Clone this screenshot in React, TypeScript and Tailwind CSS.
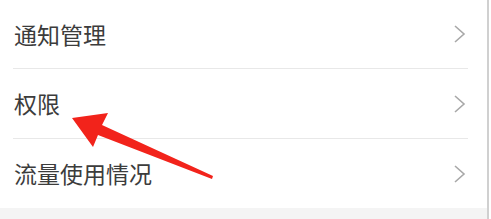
const items = ["通知管理", "权限", "流量使用情况"];

const Chevron = () => (
  <svg width="13" height="20" viewBox="0 0 13 20" fill="none">
    <polyline
      points="2,2 11,10 2,18"
      stroke="#a8a8a8"
      strokeWidth="1.6"
      strokeLinejoin="miter"
    />
  </svg>
);

const App = () => {
  return (
    <div className="relative flex h-[219px] w-[491px] overflow-hidden bg-white">
      <div className="flex w-[487px] flex-col">
        {items.map((label, i) => (
          <div key={label} className="flex flex-col">
            {i > 0 && <div className="ml-[13px] mr-[19px] h-px bg-[#e8e8e8]" />}
            <div
              className={`flex items-center justify-between pl-[14px] pr-[21px] ${
                i === 0 ? "h-[68px]" : "h-[69px]"
              }`}
            >
              <span
                className="text-[23px] leading-none text-[#3c3c3c]"
                style={{ fontFamily: '"Noto Sans CJK SC", sans-serif' }}
              >
                {label}
              </span>
              <Chevron />
            </div>
          </div>
        ))}
        <div className="flex-1 bg-[#f4f4f4]" />
      </div>
      <div className="w-[2px] bg-[#d0d0d0]" />
      <div className="flex-1 bg-white" />

      <svg
        className="pointer-events-none absolute left-0 top-0"
        width="491"
        height="219"
        viewBox="0 0 491 219"
      >
        <polygon
          points="72,118 108,113 102,125 213,176 212,179 98,135 93,147"
          fill="#f2231b"
        />
      </svg>
    </div>
  );
};

export default App;
